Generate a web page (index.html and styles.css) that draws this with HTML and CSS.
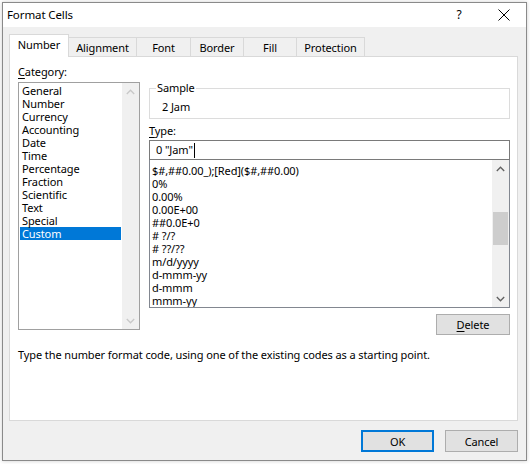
FILE: index.html
```html
<!DOCTYPE html>
<html>
<head>
<meta charset="utf-8">
<link rel="stylesheet" href="styles.css">
</head>
<body>
<div class="screen">
  <div class="dialog">
    <div class="titlebar">
      <span class="title">Format Cells</span>
      <span class="help">?</span>
      <span class="close"><svg width="12" height="12" viewBox="0 0 12 12"><path d="M0.5 0.5 L11.5 11.5 M11.5 0.5 L0.5 11.5" stroke="#000" stroke-width="1" fill="none"/></svg></span>
    </div>
    <div class="body">
      <div class="tabs">
        <div class="tab t-number active">Number</div>
        <div class="tab t-align">Alignment</div>
        <div class="tab t-font">Font</div>
        <div class="tab t-border">Border</div>
        <div class="tab t-fill">Fill</div>
        <div class="tab t-prot">Protection</div>
      </div>
      <div class="panel">
        <div class="columns">
          <div class="left">
            <div class="label"><u>C</u>ategory:</div>
            <div class="listbox cat">
              <ul class="items">
                <li>General</li>
                <li>Number</li>
                <li>Currency</li>
                <li>Accounting</li>
                <li>Date</li>
                <li>Time</li>
                <li>Percentage</li>
                <li>Fraction</li>
                <li>Scientific</li>
                <li>Text</li>
                <li>Special</li>
                <li class="selected">Custom</li>
              </ul>
              <div class="vscroll disabled">
                <div class="arrow"><svg width="9" height="6" viewBox="0 0 9 6"><path d="M0.8 5 L4.5 1.2 L8.2 5" stroke="currentColor" stroke-width="1.3" fill="none"/></svg></div>
                <div class="track"></div>
                <div class="arrow"><svg width="9" height="6" viewBox="0 0 9 6"><path d="M0.8 1 L4.5 4.8 L8.2 1" stroke="currentColor" stroke-width="1.3" fill="none"/></svg></div>
              </div>
            </div>
          </div>
          <div class="right">
            <fieldset class="sample">
              <legend>Sample</legend>
              <div class="sample-value">2 Jam</div>
            </fieldset>
            <div class="label type-label"><u>T</u>ype:</div>
            <div class="input">0 "Jam"<span class="caret"></span></div>
            <div class="listbox fmt">
              <ul class="items">
                <li>$#,##0.00_);[Red]($#,##0.00)</li>
                <li>0%</li>
                <li>0.00%</li>
                <li>0.00E+00</li>
                <li>##0.0E+0</li>
                <li># ?/?</li>
                <li># ??/??</li>
                <li>m/d/yyyy</li>
                <li>d-mmm-yy</li>
                <li>d-mmm</li>
                <li>mmm-yy</li>
              </ul>
              <div class="vscroll">
                <div class="arrow"><svg width="9" height="6" viewBox="0 0 9 6"><path d="M0.8 5 L4.5 1.2 L8.2 5" stroke="currentColor" stroke-width="1.3" fill="none"/></svg></div>
                <div class="track">
                  <div class="thumb"></div>
                </div>
                <div class="arrow"><svg width="9" height="6" viewBox="0 0 9 6"><path d="M0.8 1 L4.5 4.8 L8.2 1" stroke="currentColor" stroke-width="1.3" fill="none"/></svg></div>
              </div>
            </div>
            <div class="delete-row">
              <button class="btn delete"><u>D</u>elete</button>
            </div>
          </div>
        </div>
        <p class="desc">Type the number format code, using one of the existing codes as a starting point.</p>
      </div>
      <div class="footer">
        <button class="btn ok">OK</button>
        <button class="btn">Cancel</button>
      </div>
    </div>
  </div>
</div>
</body>
</html>
```

FILE: styles.css
```css
* { box-sizing: border-box; }
html, body { margin: 0; padding: 0; }
body {
  width: 530px;
  height: 464px;
  overflow: hidden;
  background: #ffffff;
  font-family: "Noto Sans", "Open Sans", sans-serif;
  font-size: 11px;
  letter-spacing: -0.1px;
  color: #000;
}
u { text-decoration: underline; text-underline-offset: 2px; }

.screen { padding: 2px 0 0 2px; }

.dialog {
  width: 525px;
  height: 459px;
  border: 1px solid #8a8a8a;
  background: #f0f0f0;
  display: flex;
  flex-direction: column;
  box-shadow: 0 0 4px rgba(0,0,0,0.2);
}

.titlebar {
  flex: none;
  height: 24px;
  background: #fff;
  display: flex;
  align-items: center;
  padding-bottom: 1px;
}
.title { flex: 1; padding-left: 4px; font-size: 11.5px; }
.help { width: 12px; text-align: center; font-size: 12px; margin-right: 33px; }
.close { width: 12px; height: 12px; margin-right: 16px; display: flex; }

.body {
  flex: 1;
  padding: 7px 8px 0 6px;
  display: flex;
  flex-direction: column;
}

.tabs {
  display: flex;
  align-items: flex-end;
  height: 22px;
}
.tab {
  height: 19px;
  border: 1px solid #d9d9d9;
  border-bottom: none;
  margin-right: -1px;
  display: flex;
  align-items: center;
  justify-content: center;
  background: #f0f0f0;
}
.tab.active {
  height: 23px;
  background: #fff;
  margin-bottom: -1px;
  position: relative;
  z-index: 1;
  align-items: flex-start;
  padding-top: 2px;
}
.t-number { width: 60px; }
.t-align { width: 69px; }
.t-font { width: 55px; }
.t-border { width: 54px; }
.t-fill { width: 54px; }
.t-prot { width: 69px; }

.panel {
  width: 509px;
  height: 365px;
  background: #fff;
  border: 1px solid #d9d9d9;
  padding: 8px 7px 0 8px;
}

.columns {
  display: grid;
  grid-template-columns: 122px 1fr;
  column-gap: 9px;
}

.label { line-height: 14px; height: 14px; margin-bottom: 3px; }

.listbox {
  border: 1px solid #a0a0a0;
  display: flex;
  overflow: hidden;
}
.items {
  list-style: none;
  margin: 0;
  padding: 0;
  flex: 1;
}
.items li {
  height: 13px;
  line-height: 13px;
  white-space: nowrap;
}

.cat { height: 248px; }
.cat .items { padding: 1px 1px 0 1px; }
.cat .items li { padding-left: 2px; }
.cat .items li.selected { background: #0078d7; color: #fff; }

.vscroll {
  width: 17px;
  flex: none;
  background: #f0f0f0;
  display: flex;
  flex-direction: column;
  color: #606060;
}
.vscroll.disabled { color: #c8c8c8; }
.arrow {
  height: 17px;
  display: flex;
  align-items: center;
  justify-content: center;
}
.track { flex: 1; }
.thumb {
  margin-top: 35px;
  margin-left: 1px;
  margin-right: 1px;
  height: 33px;
  background: #cdcdcd;
}

.right { padding-top: 16px; display: flex; flex-direction: column; }

.sample {
  margin: 0;
  border: 1px solid #dcdcdc;
  padding: 0 0 4px 6px;
  min-width: 0;
}
.sample legend {
  padding: 0 1px;
  line-height: 14px;
}
.sample-value {
  line-height: 14px;
  padding: 5px 0 0 6px;
}

.type-label { margin-top: 5px; margin-bottom: 2px; }

.input {
  height: 20px;
  border: 1px solid #7a7a7a;
  padding-left: 6px;
  line-height: 18px;
  display: flex;
  align-items: center;
}
.caret {
  display: inline-block;
  width: 1px;
  height: 15px;
  background: #000;
  margin-left: 1px;
}

.fmt {
  height: 148px;
  border-top: none;
  border-color: #828790;
}
.fmt .items { padding: 4px 0 0 2px; }

.delete-row {
  display: flex;
  justify-content: flex-end;
  margin-top: 6px;
}

.btn {
  font-family: inherit;
  font-size: inherit;
  letter-spacing: inherit;
  color: #000;
  background: #e1e1e1;
  border: 1px solid #adadad;
  height: 21px;
  padding: 0;
  margin: 0;
}
.delete { width: 74px; }

.desc {
  margin: 13px 0 0 0;
  line-height: 14px;
}

.footer {
  display: flex;
  justify-content: flex-end;
  gap: 11px;
  width: 509px;
  margin-top: 9px;
}
.footer .btn { width: 73px; height: 22px; }
.footer .ok { border: 2px solid #0078d7; }
```
